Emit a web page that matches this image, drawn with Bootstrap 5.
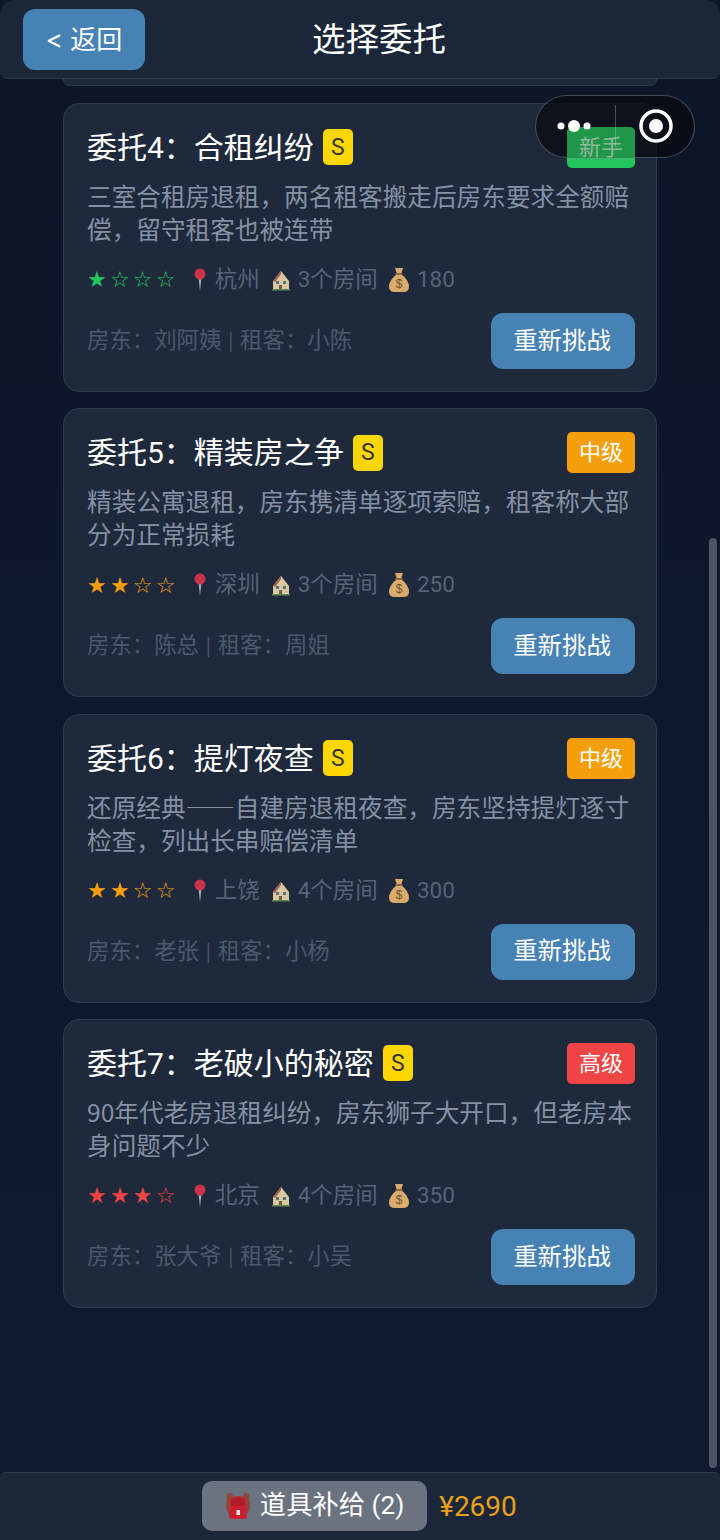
<!DOCTYPE html>
<html lang="zh-CN">

<head>
    <meta charset="UTF-8">
    <meta name="viewport" content="width=device-width, initial-scale=1.0">
    <title>选择委托</title>
    <link rel="stylesheet" href="https://cdn.jsdelivr.net/npm/bootstrap@5.3.2/dist/css/bootstrap.min.css">
    <script src="https://cdn.jsdelivr.net/npm/bootstrap@5.3.2/dist/js/bootstrap.bundle.min.js"></script>

    <style>
        html, body {
            height: 1540px;
            overflow: hidden;
        }

        body {
            background: linear-gradient(180deg, #0d1629 0%, #0f1a2e 100%);
            font-family: "Roboto", "Noto Sans CJK SC", sans-serif;
            color: #fff;
        }

        .page-wrap {
            height: 1540px;
        }

        /* top bar */
        .top-bar {
            height: 79px;
            background: #1c2639;
            border-bottom: 1px solid #2f3a4e;
            border-radius: 14px 14px 8px 8px;
            padding-left: 23px;
        }

        .back-btn {
            width: 122px;
            height: 61px;
            margin-top: 1px;
            background: #4682b4;
            border: 0;
            border-radius: 12px;
            color: #fff;
            font-family: "Inter", "Noto Sans CJK SC", sans-serif;
            font-size: 26px;
            line-height: 1;
            padding: 0;
        }

        .top-title {
            margin: 2px 0 0 167px;
            font-size: 33.5px;
            font-weight: 400;
            line-height: 1;
        }

        /* list */
        .task-list {
            padding: 0 63px;
            gap: 16.33px;
        }

        .stub-card {
            height: 7px;
            margin-bottom: .6px;
            background: #1e293b;
            border: 1px solid #2f3a4e;
            border-top: 0;
            border-radius: 0 0 14px 14px;
        }

        .task-card {
            height: 289px;
            flex: none;
            background: #1e293b;
            border: 1px solid #2f3a4e;
            border-radius: 16px;
            padding: 23px 21px 22px 23px;
        }

        .task-title {
            font-size: 30px;
            font-weight: 400;
            line-height: 41px;
            margin: 0;
        }

        .grade-s {
            width: 30px;
            height: 36px;
            margin-left: 9px;
            background: #ffd700;
            color: #333;
            border-radius: 5px;
            font-size: 23px;
        }

        .level-tag {
            width: 68px;
            height: 41px;
            border-radius: 5px;
            font-size: 22px;
            color: #fff;
        }

        /* this tag sits under the capsule, so its covered part is painted darker */
        .lv-new {
            position: relative;
            z-index: 1;
            color: #8fb99c;
            background: linear-gradient(#1f9648 0 31px, #4fa873 31px 32px, #22c55e 32px);
        }

        .lv-mid { background: #f59e0b; }
        .lv-high { background: #ef4444; }

        .task-desc {
            margin: 11px 0 0;
            font-family: "Noto Sans CJK SC", sans-serif;
            font-size: 24.65px;
            line-height: 33px;
            color: #8490a3;
        }

        .task-meta {
            margin-top: 18px;
            height: 34px;
            font-size: 22.5px;
            color: #566378;
        }

        .stars {
            font-family: "DejaVu Sans", sans-serif;
            font-size: 22px;
            letter-spacing: 3.2px;
            margin-right: 6px;
        }

        .s-new { color: #22c55e; }
        .s-mid { color: #f59e0b; }
        .s-high { color: #ef4444; }

        .meta-icon {
            flex: none;
        }

        .after-text {
            margin-left: 3px;
        }

        .house-icon {
            margin-right: -1px;
        }

        .bag-icon {
            margin: 0 -1px 0 2px;
        }

        .task-foot {
            margin-top: auto;
        }

        .people {
            font-size: 22.4px;
            color: #4c586c;
        }

        .people-sep {
            font-family: "Inter", sans-serif;
            font-size: 17px;
            margin: 0 1px;
        }

        .retry-btn {
            width: 144px;
            height: 56px;
            background: #4682b4;
            border: 0;
            border-radius: 12px;
            color: #fff;
            font-size: 24.4px;
            padding: 0 2px 0 0;
        }

        /* bottom bar */
        .bottom-bar {
            height: 68px;
            background: #1c2639;
            border-top: 1px solid #2f3a4e;
            border-radius: 6px 6px 0 0;
            gap: 12px;
        }

        .supply-btn {
            width: 225px;
            height: 50px;
            margin-bottom: 1px;
            background: #6b7280;
            border: 0;
            border-radius: 10px;
            color: #fff;
            font-size: 26.3px;
            padding: 0;
            gap: 9px;
        }

        .money {
            color: #e9a11c;
            font-size: 28px;
            margin-right: 1px;
        }

        /* things that float over the page */
        .scroll-thumb {
            position: absolute;
            right: 3px;
            top: 538px;
            width: 8px;
            height: 930px;
            background: #4d5564;
            border-radius: 4px;
        }

        .wx-capsule {
            position: absolute;
            left: 535px;
            top: 95px;
            width: 160px;
            height: 63px;
            border-radius: 32px;
        }

        .capsule-back {
            background: rgba(8, 10, 16, .72);
            border: 1px solid rgba(255, 255, 255, .25);
        }

        /* dots, divider and ring stay above the tag */
        .capsule-front {
            z-index: 2;
        }

        .capsule-front .split {
            position: absolute;
            left: 80px;
            top: 10px;
            width: 1px;
            height: 42px;
            background: rgba(255, 255, 255, .25);
        }

        .capsule-front svg {
            position: absolute;
        }
    </style>
</head>

<body>
    <div class="page-wrap d-flex flex-column position-relative">
        <!-- Top bar -->
        <header class="top-bar d-flex align-items-center flex-shrink-0">
            <button class="back-btn" type="button">&lt; 返回</button>
            <h1 class="top-title">选择委托</h1>
        </header>

        <!-- Task list -->
        <main id="task-list" class="task-list d-flex flex-column flex-grow-1">
            <div class="stub-card"></div>
        </main>

        <!-- Bottom bar -->
        <footer class="bottom-bar d-flex justify-content-center align-items-center flex-shrink-0">
            <button class="supply-btn d-flex justify-content-center align-items-center" type="button">
                <svg width="26" height="28" viewBox="0 0 26 28">
                    <path d="M2 7 Q0 1 6 1 L9 5 L5 22 Q1 20 1 12Z" fill="#96433a" />
                    <path d="M24 7 Q26 1 20 1 L17 5 L21 22 Q25 20 25 12Z" fill="#96433a" />
                    <path d="M6 7 Q13 1 20 7 L22 24 Q22 27 19 27 L7 27 Q4 27 4 24Z" fill="#c9202f" />
                    <path d="M6 8 Q13 3 20 8 L20 14 L6 14Z" fill="#b01c2a" />
                    <rect x="11.5" y="18" width="3.5" height="5" fill="#f4e6e6" />
                </svg>
                <span>道具补给 (2)</span>
            </button>
            <span class="money">¥2690</span>
        </footer>

        <div class="scroll-thumb"></div>

        <!-- Mini program capsule -->
        <div class="wx-capsule capsule-back"></div>
        <div class="wx-capsule capsule-front">
            <svg style="left:22px;top:23px" width="36" height="16" viewBox="0 0 36 16">
                <circle cx="4" cy="8" r="3.5" fill="#fff" />
                <circle cx="17" cy="8" r="6" fill="#fff" />
                <circle cx="30" cy="8" r="3.5" fill="#fff" />
            </svg>
            <div class="split"></div>
            <svg style="left:103px;top:13px" width="36" height="36" viewBox="0 0 36 36">
                <circle cx="18" cy="18" r="15" fill="none" stroke="#fff" stroke-width="3.5" />
                <circle cx="18" cy="18" r="7" fill="#fff" />
            </svg>
        </div>
    </div>

    <script>
        const PIN = `<svg class="meta-icon" width="14" height="24" viewBox="0 0 14 24"><path d="M5.6 10 L8.4 10 L7 23Z" fill="#aab2bc"/><circle cx="7" cy="6" r="5.5" fill="#c8324a"/></svg>`;
        const HOUSE = `<svg class="meta-icon after-text house-icon" width="20" height="22" viewBox="0 0 20 22"><path d="M10 2 L18 12 L18 20 L2 20 L2 12Z" fill="#d9c9a0"/><path d="M10 2 L2 12 L4 13 L10 5Z" fill="#a8574a"/><rect x="5" y="12" width="3" height="3" fill="#5b7083"/><rect x="12" y="12" width="3" height="3" fill="#5b7083"/><rect x="8" y="16" width="3" height="4" fill="#6f5a48"/><rect x="1" y="20" width="18" height="1.5" fill="#5f8a4f"/></svg>`;
        const BAG = `<svg class="meta-icon bag-icon" width="22" height="26" viewBox="0 0 22 26"><path d="M7 1 L15 1 L13 7 Q21 13 21 20 Q21 25 15 25 L7 25 Q1 25 1 20 Q1 13 9 7Z" fill="#d9ab6c"/><rect x="7.5" y="6" width="7" height="2" fill="#8c6a3c"/><text x="11" y="21" font-size="12" text-anchor="middle" fill="#6e5330" font-family="Liberation Sans">$</text></svg>`;

        const tasks = [
            { title: "委托4：合租纠纷", level: "新手", cls: "new", stars: 1, desc: "三室合租房退租，两名租客搬走后房东要求全额赔偿，留守租客也被连带", city: "杭州", rooms: 3, pay: 180, host: "房东：刘阿姨", guest: "租客：小陈" },
            { title: "委托5：精装房之争", level: "中级", cls: "mid", stars: 2, desc: "精装公寓退租，房东携清单逐项索赔，租客称大部分为正常损耗", city: "深圳", rooms: 3, pay: 250, host: "房东：陈总", guest: "租客：周姐" },
            { title: "委托6：提灯夜查", level: "中级", cls: "mid", stars: 2, desc: "还原经典——自建房退租夜查，房东坚持提灯逐寸检查，列出长串赔偿清单", city: "上饶", rooms: 4, pay: 300, host: "房东：老张", guest: "租客：小杨" },
            { title: "委托7：老破小的秘密", level: "高级", cls: "high", stars: 3, desc: "90年代老房退租纠纷，房东狮子大开口，但老房本身问题不少", city: "北京", rooms: 4, pay: 350, host: "房东：张大爷", guest: "租客：小吴" }
        ];

        const list = document.getElementById("task-list");
        tasks.forEach(t => {
            list.insertAdjacentHTML("beforeend", `
                <section class="task-card d-flex flex-column">
                    <div class="d-flex justify-content-between align-items-center">
                        <h2 class="task-title d-flex align-items-center">${t.title}<span class="grade-s d-inline-flex justify-content-center align-items-center">S</span></h2>
                        <span class="level-tag lv-${t.cls} d-inline-flex justify-content-center align-items-center">${t.level}</span>
                    </div>
                    <p class="task-desc">${t.desc}</p>
                    <div class="task-meta d-flex align-items-center gap-2">
                        <span class="stars s-${t.cls}">${"★".repeat(t.stars)}${"☆".repeat(4 - t.stars)}</span>
                        ${PIN}<span>${t.city}</span>${HOUSE}<span>${t.rooms}个房间</span>${BAG}<span>${t.pay}</span>
                    </div>
                    <div class="task-foot d-flex justify-content-between align-items-center">
                        <span class="people">${t.host} <span class="people-sep">|</span> ${t.guest}</span>
                        <button class="retry-btn" type="button">重新挑战</button>
                    </div>
                </section>`);
        });
    </script>
</body>

</html>
